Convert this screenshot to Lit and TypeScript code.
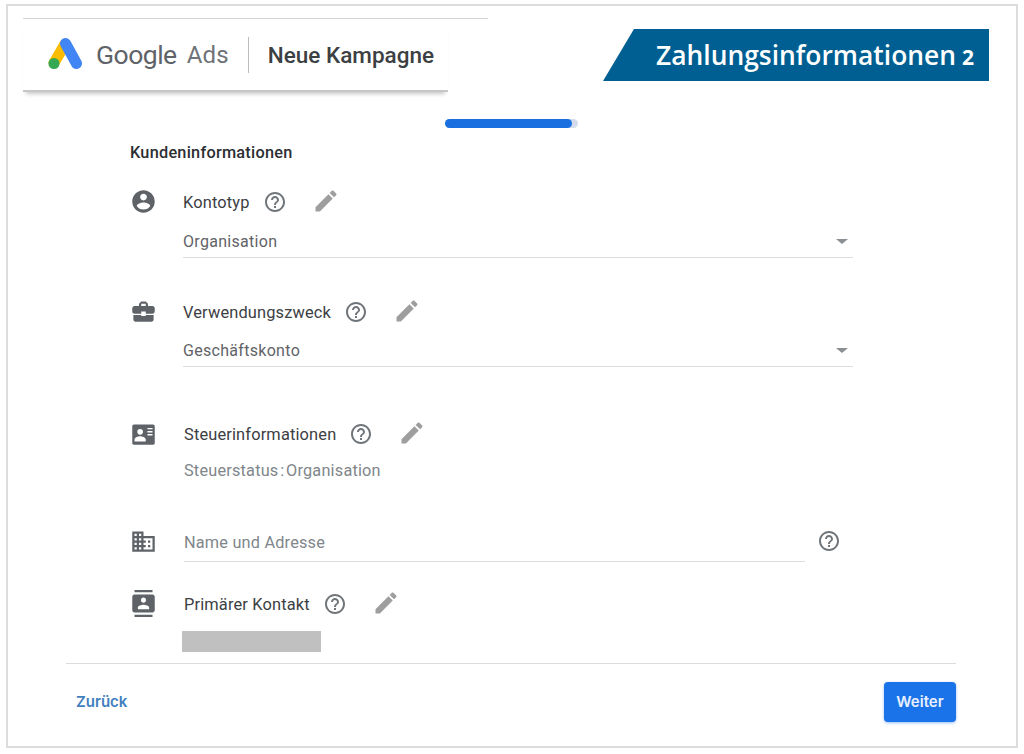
import { LitElement, html, css, svg } from "lit";
import { customElement } from "lit/decorators.js";

const P = {
  account: "M12 2C6.48 2 2 6.48 2 12s4.48 10 10 10 10-4.48 10-10S17.52 2 12 2zm0 3c1.66 0 3 1.34 3 3s-1.34 3-3 3-3-1.34-3-3 1.34-3 3-3zm0 14.2c-2.5 0-4.71-1.28-6-3.22.03-1.99 4-3.08 6-3.08 1.99 0 5.97 1.09 6 3.08-1.29 1.94-3.5 3.22-6 3.22z",
  case: "M10 16v-1H3.01L3 19c0 1.11.89 2 2 2h14c1.11 0 2-.89 2-2v-4h-7v1h-4zm10-9h-4.01V5l-2-2h-4l-2 2v2H4c-1.1 0-2 .9-2 2v3c0 1.11.89 2 2 2h6v-2h4v2h6c1.1 0 2-.9 2-2V9c0-1.1-.9-2-2-2zm-6 0h-4V5h4v2z",
  edit: "M3 17.25V21h3.75L17.81 9.94l-3.75-3.75L3 17.25zM20.71 7.04c.39-.39.39-1.02 0-1.41l-2.34-2.34c-.39-.39-1.02-.39-1.41 0l-1.83 1.83 3.75 3.75 1.83-1.83z",
  help: "M11 18h2v-2h-2v2zm1-16C6.48 2 2 6.48 2 12s4.48 10 10 10 10-4.48 10-10S17.52 2 12 2zm0 18c-4.41 0-8-3.59-8-8s3.59-8 8-8 8 3.59 8 8-3.59 8-8 8zm0-14c-2.21 0-4 1.79-4 4h2c0-1.1.9-2 2-2s2 .9 2 2c0 2-3 1.75-3 5h2c0-2.25 3-2.5 3-5 0-2.21-1.79-4-4-4z",
  domain: "M12 7V3H2v18h20V7H12zM6 19H4v-2h2v2zm0-4H4v-2h2v2zm0-4H4V9h2v2zm0-4H4V5h2v2zm4 12H8v-2h2v2zm0-4H8v-2h2v2zm0-4H8V9h2v2zm0-4H8V5h2v2zm10 12h-8v-2h2v-2h-2v-2h2v-2h-2V9h8v10zm-2-8h-2v2h2v-2zm0 4h-2v2h2v-2z",
  contacts: "M20 0H4v2h16V0zM4 24h16v-2H4v2zM20 4H4c-1.1 0-2 .9-2 2v12c0 1.1.9 2 2 2h16c1.1 0 2-.9 2-2V6c0-1.1-.9-2-2-2zm-8 2.75c1.24 0 2.25 1.01 2.25 2.25s-1.01 2.25-2.25 2.25S9.75 10.24 9.75 9 10.76 6.75 12 6.75zM17 17H7v-1.5c0-1.67 3.33-2.5 5-2.5s5 .83 5 2.5V17z",
  card: "M3.500 4h17c.9 0 1.500.7 1.500 1.500v15c0 .8-.6 1.500-1.500 1.500h-17C2.600 22 2 21.300 2 20.500v-15C2 4.700 2.600 4 3.500 4zM9 8a2.500 2.500 0 1 0 0 5 2.500 2.500 0 0 0 0-5zM4 19h10v-1.500c0-2-3.300-3-5-3s-5 1-5 3V19zM15.500 7v1.300H20V7h-4.500zm0 2.700V11H20V9.700h-4.500zm0 2.700v1.300H20v-1.300h-4.500z",
};

const icon = (d: string, cls: string) => html`<svg class=${cls} viewBox="0 0 24 24">${svg`<path d=${d} fill-rule="evenodd"></path>`}</svg>`;

@customElement("app-root")
export class AppRoot extends LitElement {
  static styles = css`
    :host { display: block; font-family: Roboto, "Liberation Sans", sans-serif; }
    * { box-sizing: border-box; }
    .frame { margin: 4px 0 0 6px; width: 1012px; height: 744px; border: 2px solid #dcdcdc; background: #fff; overflow: hidden; }
    .top { display: flex; align-items: flex-start; padding: 12px 0 0 15px; }
    .brand { width: 465px; border-top: 1px solid #d4d4d4; flex: none; }
    .brandbar { width: 425px; height: 73px; display: flex; align-items: center; padding: 0 0 0 24px; border-bottom: 2px solid #c6c6c6; box-shadow: 0 5px 4px -3px rgba(0,0,0,.22); }
    .logo { width: 36px; height: 34px; flex: none; margin: -2px 12px 0 0; }
    .g1 { font-size: 26.500px; color: #5f6368; letter-spacing: -.5px; margin-left: 1px; }
    .g2 { font-size: 24px; color: #6f7377; margin-left: 10px; letter-spacing: .2px; }
    .sep { width: 1px; height: 36px; background: #bdbdbd; margin: 0 19px 0 19px; }
    .camp { font-size: 22.500px; font-weight: 500; color: #3c4043; white-space: nowrap; }
    .banner { margin: 11px 0 0 115px; width: 386px; height: 52px; background: #005f92; clip-path: polygon(31px 0, 100% 0, 100% 100%, 0 100%); display: flex; align-items: center; justify-content: flex-end; padding-right: 15px; color: #fff; font-family: "Open Sans", sans-serif; font-weight: 600; font-size: 26.400px; white-space: nowrap; }
    .banner small { font-size: 21px; font-weight: 700; margin-left: 6px; }
    .progress { margin: 27px 0 0 437px; width: 133px; height: 9px; border-radius: 5px; background: #d3dcec; }
    .progress div { height: 100%; width: 127px; border-radius: 5px; background: #1a6fe0; }
    .form { padding-left: 122px; width: 845px; }
    .title { margin-top: 15px; height: 20px; line-height: 20px; font-size: 16.300px; font-weight: 500; color: #2c2f33; letter-spacing: .25px; }
    .row { display: grid; grid-template-columns: 53px 1fr; grid-template-rows: 24px; align-items: center; height: 24px; }
    .r1 { margin-top: 27px; }
    .r2 { margin-top: 42px; }
    .r3 { margin-top: 55px; grid-template-columns: 54px 1fr; }
    .r4 { margin-top: 46px; grid-template-columns: 54px 1fr; grid-template-rows: 33px; height: 33px; align-items: start; }
    .r4 .lead { margin-top: -1px; }
    .r5 { margin-top: 30px; grid-template-columns: 54px 1fr; }
    .lead { width: 27px; height: 27px; fill: #5f6368; margin-top: -2px; display: block; }
    .head { display: flex; align-items: center; font-size: 16.400px; color: #3c4043; letter-spacing: .15px; white-space: nowrap; margin-top: 1px; }
    .help { width: 24px; height: 24px; fill: #70757a; margin-left: 13px; flex: none; margin-top: -1px; }
    .edit { width: 28px; height: 28px; fill: #9e9e9e; margin: -3px 0 0 25px; flex: none; }
    .select { margin-left: 53px; height: 29px; border-bottom: 1px solid #dadce0; display: flex; justify-content: space-between; align-items: center; padding: 0 5px 4px 0; font-size: 16px; color: #5f6368; letter-spacing: .3px; }
    .s1 { margin-top: 15px; }
    .s2 { margin-top: 14px; }
    .caret { width: 0; height: 0; border-left: 6.500px solid transparent; border-right: 6.500px solid transparent; border-top: 5.500px solid #8a8f94; }
    .sub { margin: 13px 0 0 54px; height: 24px; line-height: 24px; font-size: 16.300px; color: #80868b; letter-spacing: .2px; word-spacing: -2.500px; }
    .addr { display: flex; align-items: flex-start; }
    .addr .field { width: 621px; height: 33px; border-bottom: 1px solid #dadce0; line-height: 27px; font-size: 16.300px; color: #80868b; letter-spacing: .2px; }
    .addr .help { margin-left: 12px; margin-top: 0; }
    .block { margin: 15px 0 0 52px; width: 139px; height: 21px; background: #c0c0c0; }
    .foot { margin: 11px 0 0 58px; width: 890px; border-top: 1px solid #dadce0; display: flex; justify-content: space-between; align-items: center; padding: 18px 0 0 10px; }
    .back { font: 600 15px Inter, Roboto, sans-serif; color: #3f7fbf; margin-top: -2px; }
    .next { width: 72px; height: 40px; border: 0; padding: 0 0 2px; border-radius: 4px; background: #1a73e8; color: #e8f0fe; font: 600 15px Inter, Roboto, sans-serif; box-shadow: 0 1px 3px rgba(26,115,232,.45); }
  `;

  private head(text: string) {
    return html`<div class="head">${text}${icon(P.help, "help")}${icon(P.edit, "edit")}</div>`;
  }

  render() {
    return html`<div class="frame">
      <div class="top">
        <div class="brand">
          <div class="brandbar">
            <svg class="logo" viewBox="0 0 36 34">
              <path d="M18 7 L7 26" stroke="#fbbc04" stroke-width="11" stroke-linecap="round" fill="none"></path>
              <circle cx="7" cy="26.500" r="5.500" fill="#34a853"></circle>
              <path d="M18.500 6.500 L29.500 26.500" stroke="#4285f4" stroke-width="11" stroke-linecap="round" fill="none"></path>
            </svg>
            <span class="g1">Google</span><span class="g2">Ads</span>
            <span class="sep"></span>
            <span class="camp">Neue Kampagne</span>
          </div>
        </div>
        <div class="banner"><span>Zahlungsinformationen<small>2</small></span></div>
      </div>
      <div class="progress"><div></div></div>
      <div class="form">
        <div class="title">Kundeninformationen</div>
        <div class="row r1">${icon(P.account, "lead")}${this.head("Kontotyp")}</div>
        <div class="select s1"><span>Organisation</span><span class="caret"></span></div>
        <div class="row r2">${icon(P.case, "lead")}${this.head("Verwendungszweck")}</div>
        <div class="select s2"><span>Geschäftskonto</span><span class="caret"></span></div>
        <div class="row r3">${icon(P.card, "lead")}${this.head("Steuerinformationen")}</div>
        <div class="sub">Steuerstatus : Organisation</div>
        <div class="row r4">${icon(P.domain, "lead")}<div class="addr"><div class="field">Name und Adresse</div>${icon(P.help, "help")}</div></div>
        <div class="row r5">${icon(P.contacts, "lead")}${this.head("Primärer Kontakt")}</div>
        <div class="block"></div>
      </div>
      <div class="foot"><span class="back">Zurück</span><button class="next">Weiter</button></div>
    </div>`;
  }
}
